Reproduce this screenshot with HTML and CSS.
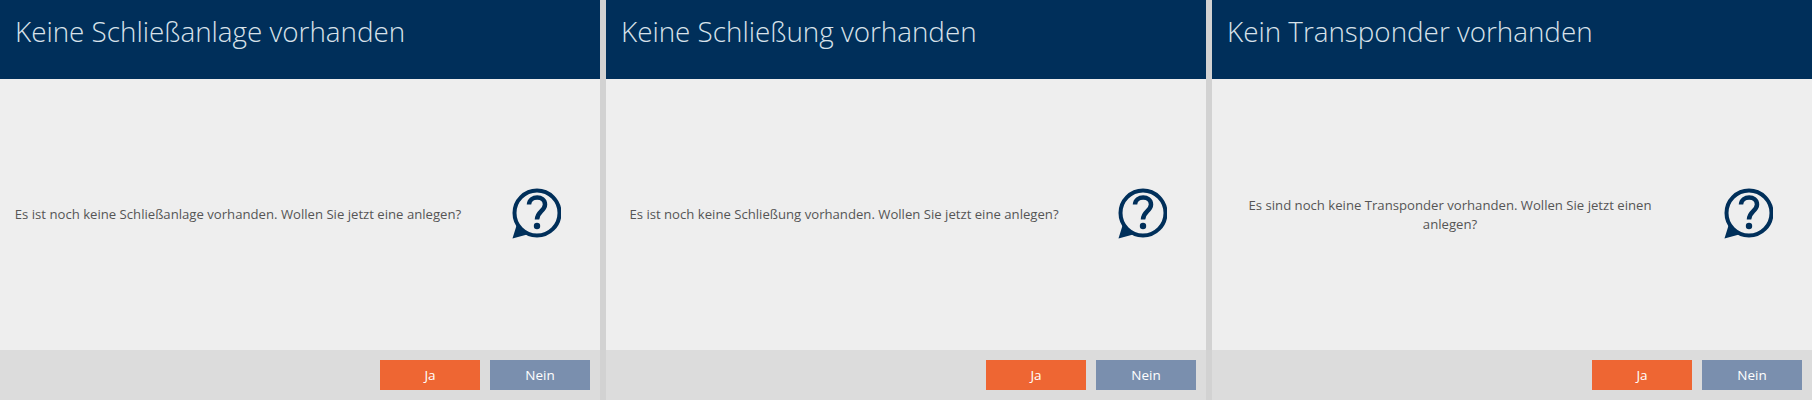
FILE: index.html
```html
<!DOCTYPE html>
<html lang="de">
<head>
    <meta charset="UTF-8">
    <title>Dialoge</title>
    <link rel="stylesheet" href="styles.css">
</head>
<body>
    <div class="dialogs">
        <div class="dialog">
            <div class="dialog-title">Keine Schließanlage vorhanden</div>
            <div class="dialog-body">
                <p class="dialog-text">Es ist noch keine Schließanlage vorhanden. Wollen Sie jetzt eine anlegen?</p>
                <div class="dialog-icon">
                    <svg width="50" height="52" viewBox="0 0 50 52"><circle cx="26" cy="25" r="22.5" fill="none" stroke="#002f5a" stroke-width="4"/><path d="M6 36 L1.500 50.500 L18 46 Z" fill="#002f5a"/><path d="M18 16.500 C18.500 7 34 7 34 16.500 C34 23 26 23.500 26 31.500" fill="none" stroke="#002f5a" stroke-width="4.500"/><circle cx="26" cy="38" r="3.200" fill="#002f5a"/></svg>
                </div>
            </div>
            <div class="dialog-footer">
                <button class="btn btn-yes">Ja</button>
                <button class="btn btn-no">Nein</button>
            </div>
        </div>
        <div class="dialog">
            <div class="dialog-title">Keine Schließung vorhanden</div>
            <div class="dialog-body">
                <p class="dialog-text">Es ist noch keine Schließung vorhanden. Wollen Sie jetzt eine anlegen?</p>
                <div class="dialog-icon">
                    <svg width="50" height="52" viewBox="0 0 50 52"><circle cx="26" cy="25" r="22.5" fill="none" stroke="#002f5a" stroke-width="4"/><path d="M6 36 L1.500 50.500 L18 46 Z" fill="#002f5a"/><path d="M18 16.500 C18.500 7 34 7 34 16.500 C34 23 26 23.500 26 31.500" fill="none" stroke="#002f5a" stroke-width="4.500"/><circle cx="26" cy="38" r="3.200" fill="#002f5a"/></svg>
                </div>
            </div>
            <div class="dialog-footer">
                <button class="btn btn-yes">Ja</button>
                <button class="btn btn-no">Nein</button>
            </div>
        </div>
        <div class="dialog">
            <div class="dialog-title">Kein Transponder vorhanden</div>
            <div class="dialog-body">
                <p class="dialog-text">Es sind noch keine Transponder vorhanden. Wollen Sie jetzt einen anlegen?</p>
                <div class="dialog-icon">
                    <svg width="50" height="52" viewBox="0 0 50 52"><circle cx="26" cy="25" r="22.5" fill="none" stroke="#002f5a" stroke-width="4"/><path d="M6 36 L1.500 50.500 L18 46 Z" fill="#002f5a"/><path d="M18 16.500 C18.500 7 34 7 34 16.500 C34 23 26 23.500 26 31.500" fill="none" stroke="#002f5a" stroke-width="4.500"/><circle cx="26" cy="38" r="3.200" fill="#002f5a"/></svg>
                </div>
            </div>
            <div class="dialog-footer">
                <button class="btn btn-yes">Ja</button>
                <button class="btn btn-no">Nein</button>
            </div>
        </div>
    </div>
</body>
</html>
```
FILE: styles.css
```css
* {
    margin: 0;
    padding: 0;
    box-sizing: border-box;
}
body {
    background-color: #d2d2d2;
    font-family: "Open Sans", "Liberation Sans", sans-serif;
    overflow: hidden;
}
.dialogs {
    display: flex;
    gap: 6px;
    width: 1812px;
    height: 400px;
}
.dialog {
    width: 600px;
    height: 400px;
    display: flex;
    flex-direction: column;
}
.dialog-title {
    height: 79px;
    padding: 11px 15px;
    background-color: #002f5a;
    color: #d8e2ea;
    font-size: 27.800px;
    font-weight: 300;
    line-height: 40px;
}
.dialog-body {
    flex: 1;
    display: flex;
    align-items: center;
    background-color: #eeeeee;
}
.dialog-text {
    width: 476px;
    padding: 0 10px;
    color: #555555;
    font-size: 13.150px;
    line-height: 19px;
    text-align: center;
}
.dialog-icon {
    flex: 1;
    display: flex;
    justify-content: center;
    padding-right: 4px;
    margin-top: -1px;
}
.dialog-footer {
    height: 50px;
    display: flex;
    justify-content: flex-end;
    align-items: center;
    gap: 10px;
    padding-right: 10px;
    background-color: #dcdcdc;
}
.btn {
    width: 100px;
    height: 30px;
    border: none;
    color: #ffffff;
    font-family: inherit;
    font-size: 13.500px;
}
.btn-yes {
    background-color: #ee6633;
}
.btn-no {
    background-color: #7a8fae;
}
```
